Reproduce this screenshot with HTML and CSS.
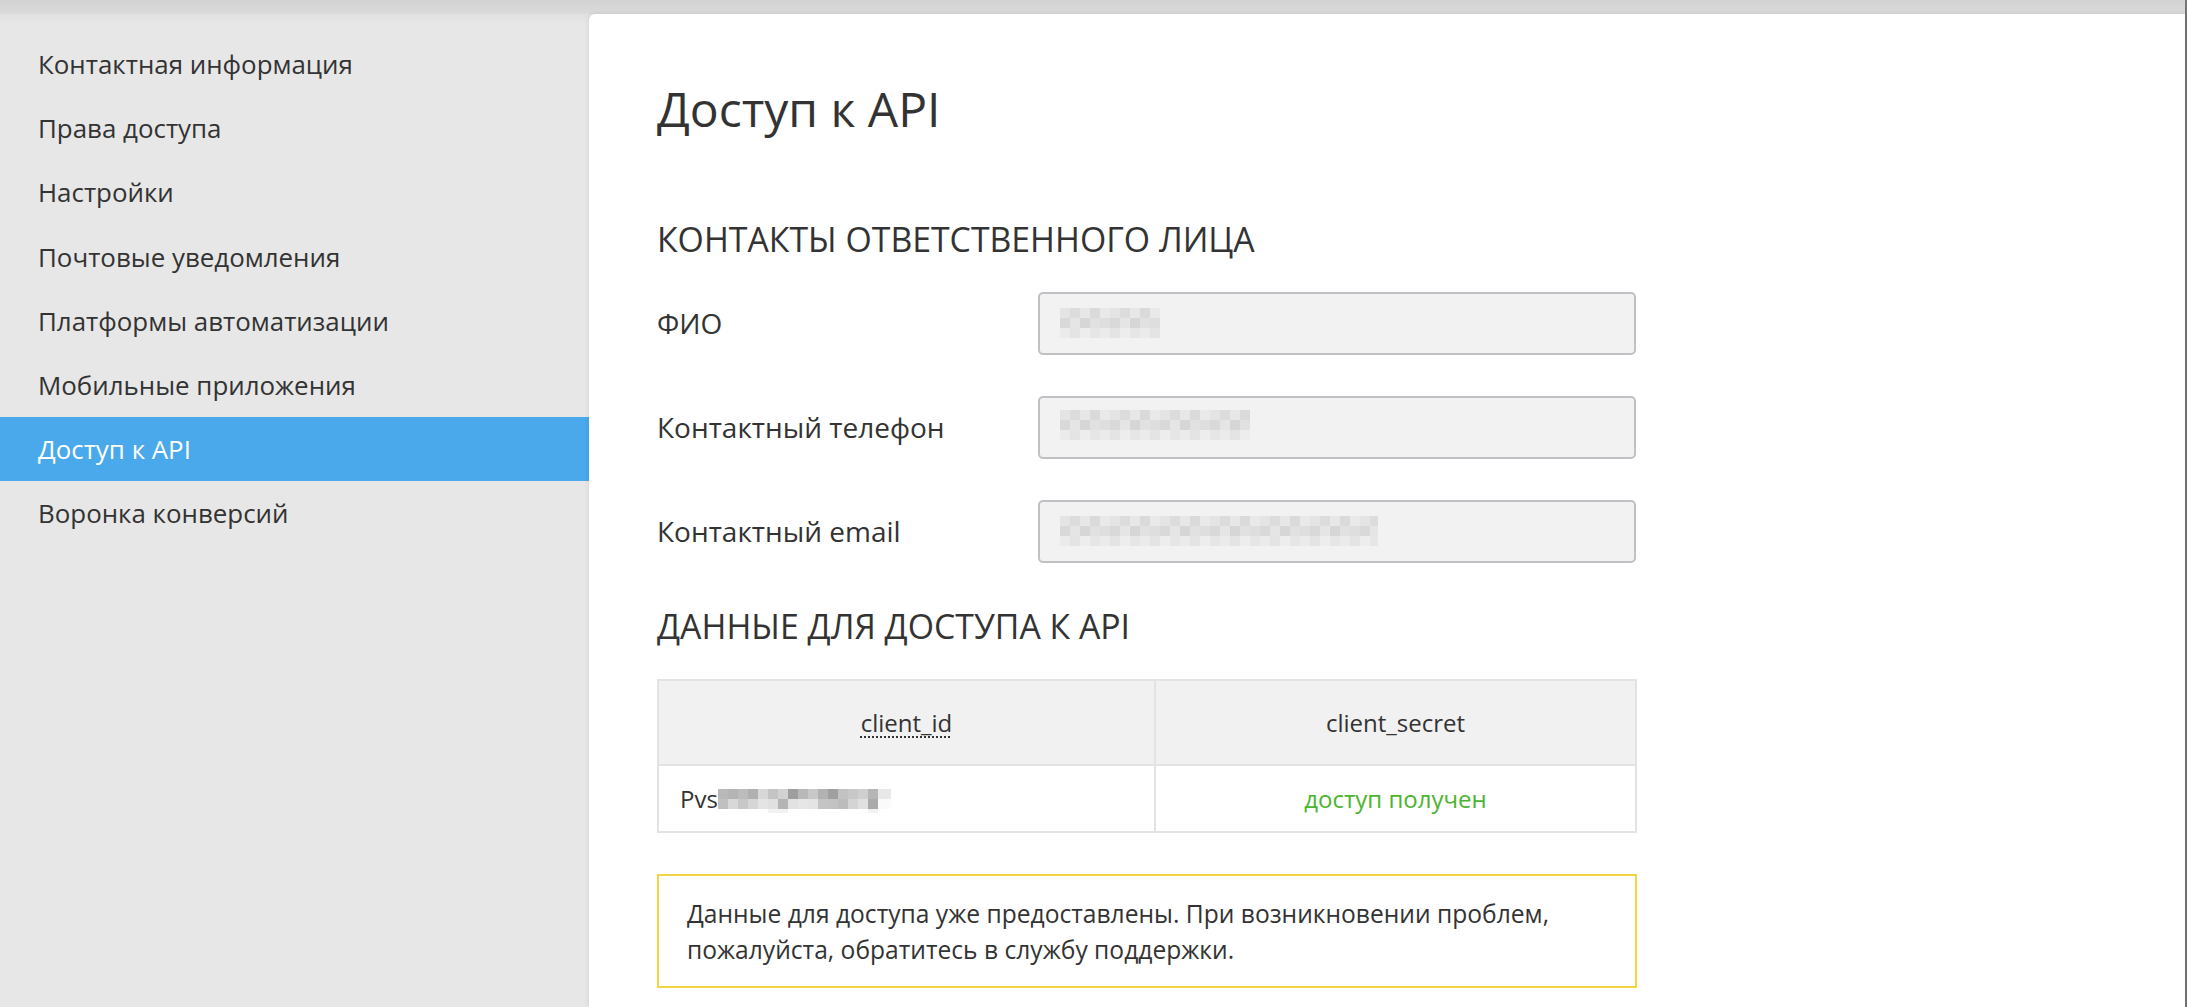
FILE: index.html
```html
<!DOCTYPE html>
<html lang="ru">
<head>
<meta charset="utf-8">
<title>Доступ к API</title>
<link rel="stylesheet" href="styles.css">
</head>
<body>
<div class="page">
  <div class="topbar"></div>
  <div class="layout">
    <nav class="sidebar">
      <a class="nav-item">Контактная информация</a>
      <a class="nav-item">Права доступа</a>
      <a class="nav-item">Настройки</a>
      <a class="nav-item">Почтовые уведомления</a>
      <a class="nav-item">Платформы автоматизации</a>
      <a class="nav-item">Мобильные приложения</a>
      <a class="nav-item active">Доступ к API</a>
      <a class="nav-item">Воронка конверсий</a>
    </nav>
    <main class="panel">
      <h1 class="title">Доступ к API</h1>
      <h2 class="section-title">КОНТАКТЫ ОТВЕТСТВЕННОГО ЛИЦА</h2>
      <div class="form">
        <div class="form-row">
          <label class="label">ФИО</label>
          <div class="input"><span class="mosaic mosaic-name"></span></div>
        </div>
        <div class="form-row">
          <label class="label">Контактный телефон</label>
          <div class="input"><span class="mosaic mosaic-phone"></span></div>
        </div>
        <div class="form-row">
          <label class="label">Контактный email</label>
          <div class="input"><span class="mosaic mosaic-email"></span></div>
        </div>
      </div>
      <h2 class="section-title section-api">ДАННЫЕ ДЛЯ ДОСТУПА К API</h2>
      <table class="api-table">
        <thead>
          <tr>
            <th class="col-id"><abbr class="hint">client_id</abbr></th>
            <th class="col-secret">client_secret</th>
          </tr>
        </thead>
        <tbody>
          <tr>
            <td class="cell-id">Pvs<span class="mosaic-id"></span></td>
            <td class="cell-status">доступ получен</td>
          </tr>
        </tbody>
      </table>
      <div class="notice">Данные для доступа уже предоставлены. При возникновении проблем,<br>пожалуйста, обратитесь в службу поддержки.</div>
    </main>
  </div>
</div>
</body>
</html>
```

FILE: styles.css
```css
* { box-sizing: border-box; }

html, body {
  margin: 0;
  padding: 0;
  height: 100%;
  overflow: hidden;
}

body {
  background: #e7e7e7;
  font-family: "Open Sans", "Noto Sans", "Liberation Sans", sans-serif;
  color: #333;
}

.page {
  min-height: 100vh;
  border-right: 2px solid #757575;
  display: flex;
  flex-direction: column;
}

.topbar {
  height: 14px;
  flex: none;
  background: linear-gradient(#d3d3d3, #dadada);
}

.layout {
  flex: 1;
  display: flex;
  background: linear-gradient(#e1e1e1, #e7e7e7 10px);
}

.sidebar {
  width: 589px;
  flex: none;
  padding-top: 18px;
  display: flex;
  flex-direction: column;
}

.nav-item {
  display: block;
  height: 64.2px;
  line-height: 64.2px;
  padding-left: 38px;
  font-size: 25.9px;
  color: #333;
  text-decoration: none;
  white-space: nowrap;
}

.nav-item.active {
  background: #49a9eb;
  color: #fff;
}

.panel {
  flex: 1;
  background: #fff;
  border-radius: 6px 0 0 0;
  box-shadow: 0 0 5px rgba(0, 0, 0, 0.10);
  padding: 66px 0 0 68px;
}

.title {
  margin: 0;
  font-size: 48px;
  font-weight: 400;
  line-height: 57.6px;
  color: #333;
}

.section-title {
  margin: 81px 0 0;
  font-size: 33.8px;
  font-weight: 400;
  line-height: 40px;
  color: #333;
}

.form {
  margin-top: 33px;
  display: flex;
  flex-direction: column;
  gap: 41px;
  width: 980px;
}

.form-row {
  display: flex;
  align-items: center;
}

.label {
  width: 381px;
  flex: none;
  font-size: 28px;
  color: #333;
}

.input {
  width: 598px;
  height: 63px;
  background: #f2f2f2;
  border: 2px solid #c1c1c5;
  border-radius: 5px;
  padding-left: 20px;
  display: flex;
  align-items: center;
}

.mosaic {
  display: inline-block;
  height: 30px;
  background-image:
    repeating-linear-gradient(90deg, #e4e4e4 0 10px, #dcdcdc 10px 20px, #e7e7e7 20px 30px, #dadada 30px 40px, #e9e9e9 40px 50px),
    repeating-linear-gradient(90deg, #d9d9d9 0 10px, #e5e5e5 10px 20px, #d6d6d6 20px 30px, #e1e1e1 30px 40px, #dedede 40px 50px),
    repeating-linear-gradient(90deg, #ebebeb 0 10px, #e4e4e4 10px 20px, #ededed 20px 30px, #e6e6e6 30px 40px);
  background-size: 100% 10px, 100% 10px, 100% 10px;
  background-position: 0 0, 0 10px, 0 20px;
  background-repeat: no-repeat;
}

.mosaic-name { width: 100px; }
.mosaic-phone { width: 190px; margin-top: -4px; }
.mosaic-email { width: 318px; }

.mosaic-id {
  display: inline-block;
  width: 173px;
  height: 24px;
  vertical-align: -5px;
  background-image:
    linear-gradient(90deg, #b9b9b9 0 10px, #b4b4b4 10px 20px, #bcbcbc 20px 30px, #b0b0b0 30px 40px, #d8d8d8 40px 50px, #c4c4c4 50px 60px, #d2d2d2 60px 70px, #9e9e9e 70px 80px, #b8b8b8 80px 90px, #c8c8c8 90px 100px, #b2b2b2 100px 110px, #a0a0a0 110px 120px, #c2c2c2 120px 130px, #c8c8c8 130px 140px, #cfcfcf 140px 150px, #b5b5b5 150px 160px, #e8e8e8 160px 173px),
    linear-gradient(90deg, #c0c0c0 0 10px, #d8d8d8 10px 20px, #c8c8c8 20px 30px, #d6d6d6 30px 40px, #e4e4e4 40px 50px, #e0e0e0 50px 60px, #b4b4b4 60px 70px, #e2e2e2 70px 80px, #e6e6e6 80px 90px, #e4e4e4 90px 100px, #c4c4c4 100px 110px, #c2c2c2 110px 120px, #bcbcbc 120px 130px, #d4d4d4 130px 140px, #e0e0e0 140px 150px, #aaaaaa 150px 160px, #fafafa 160px 173px),
    linear-gradient(90deg, #fff 0 50px, #f2f2f2 50px 70px, #fff 70px 150px, #f2f2f2 150px 160px, #fff 160px);
  background-size: 100% 10px, 100% 10px, 100% 4px;
  background-position: 0 0, 0 10px, 0 20px;
  background-repeat: no-repeat;
}

.section-api {
  margin-top: 43px;
}

.api-table {
  margin-top: 33px;
  width: 980px;
  border-collapse: collapse;
  font-size: 24px;
  color: #333;
}

.api-table th,
.api-table td {
  border: 2px solid #e3e3e3;
}

.api-table th {
  background: #f1f1f1;
  font-weight: 400;
  height: 85px;
  text-align: center;
}

.col-id { width: 497px; }

.hint {
  text-decoration: underline dotted;
  text-underline-offset: 5px;
  text-decoration-thickness: 2px;
}

.api-table td {
  height: 67px;
}

.cell-id {
  padding-left: 21px;
  text-align: left;
}

.cell-status {
  text-align: center;
  color: #4cb52f;
}

.notice {
  margin-top: 41px;
  width: 980px;
  border: 2px solid #f5d442;
  padding: 20px 28px 18px;
  font-size: 24.6px;
  line-height: 36px;
  color: #333;
}
```
